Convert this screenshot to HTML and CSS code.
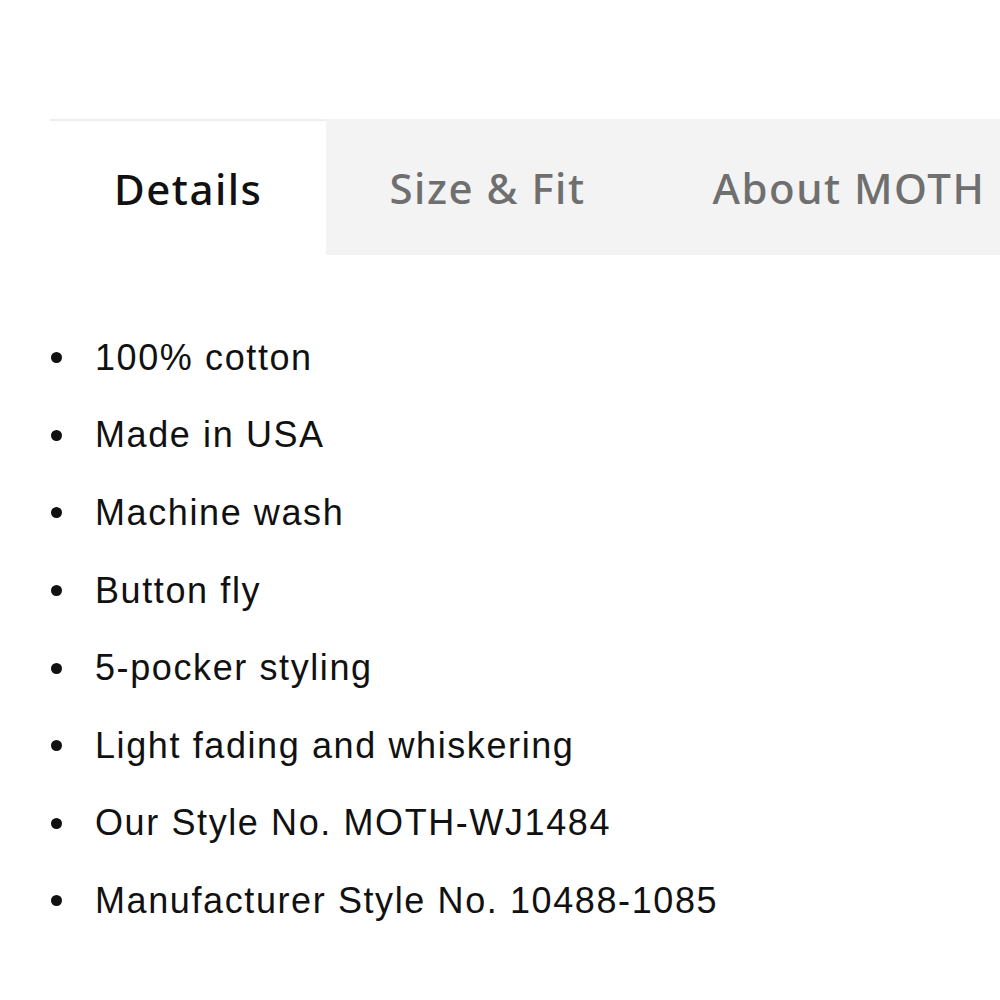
FILE: index.html
```html
<!DOCTYPE html>
<html>
<head>
<meta charset="utf-8">
<link rel="stylesheet" href="styles.css">
</head>
<body>
<div class="page">
  <div class="tabs">
    <div class="tab active">Details</div>
    <div class="tab">Size &amp; Fit</div>
    <div class="tab">About MOTH</div>
  </div>
  <ul class="details">
    <li>100% cotton</li>
    <li>Made in USA</li>
    <li>Machine wash</li>
    <li>Button fly</li>
    <li>5-pocker styling</li>
    <li>Light fading and whiskering</li>
    <li>Our Style No. MOTH-WJ1484</li>
    <li>Manufacturer Style No. 10488-1085</li>
  </ul>
</div>
</body>
</html>
```
FILE: styles.css
```css
html, body {
  margin: 0;
  padding: 0;
  background: #ffffff;
}
.page {
  padding-top: 119px;
  padding-left: 50px;
  width: 950px;
  overflow: hidden;
}
.tabs {
  display: flex;
  background: #f3f3f3;
  height: 136px;
  white-space: nowrap;
}
.tab {
  flex: none;
  display: flex;
  align-items: center;
  padding: 0 63px 0 64px;
  font-family: "Noto Sans", sans-serif;
  font-weight: 500;
  font-size: 42px;
  letter-spacing: 1.5px;
  color: #6f6f6f;
}
.tab.active {
  background: #ffffff;
  color: #111111;
  border-top: 2px solid #eeeeee;
}
.details {
  list-style: none;
  margin: 0;
  padding: 64px 0 0 0;
  font-family: "Liberation Sans", Arial, sans-serif;
  font-size: 36px;
  letter-spacing: 1.6px;
  color: #111111;
}
.details li {
  display: flex;
  align-items: center;
  height: 77.6px;
}
.details li::before {
  content: "";
  width: 11px;
  height: 11px;
  border-radius: 50%;
  background: #111111;
  margin-left: 1px;
  margin-right: 33px;
  flex: none;
}
```
